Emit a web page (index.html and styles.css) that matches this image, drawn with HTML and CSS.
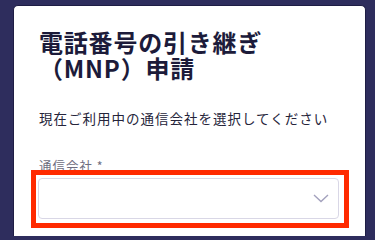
FILE: index.html
```html
<!DOCTYPE html>
<html lang="ja">
<head>
<meta charset="utf-8">
<link rel="stylesheet" href="styles.css">
</head>
<body>
<div class="card">
  <h1 class="title">電話番号の引き継ぎ<br>（MNP）申請</h1>
  <p class="lead">現在ご利用中の通信会社を選択してください</p>
  <div class="field">
    <label class="label">通信会社 *</label>
    <div class="select">
      <svg class="chevron" width="16" height="9" viewBox="0 0 16 9"><path d="M1 1 L8 7.5 L15 1" fill="none" stroke="#a3a1bd" stroke-width="1.4"/></svg>
    </div>
  </div>
</div>
<div class="highlight"></div>
</body>
</html>
```
FILE: styles.css
```css
html, body {
  margin: 0;
  padding: 0;
}
body {
  background: #2e2d5d;
  width: 375px;
  height: 236px;
  overflow: hidden;
  font-family: "Noto Sans CJK JP", "Noto Sans", sans-serif;
}
.card {
  margin: 5px 9px 0 13px;
  background: #ffffff;
  border: 1px solid #1e1d44;
  border-bottom: none;
  border-radius: 5px 5px 0 0;
  padding: 23px 26px 0 24px;
  height: 231px;
  box-sizing: border-box;
}
.title {
  margin: 0;
  font-size: 24px;
  line-height: 26px;
  font-weight: 700;
  color: #1c1b3a;
  letter-spacing: 0.8px;
  padding-left: 1px;
}
.lead {
  margin: 27px 0 0;
  font-size: 13.5px;
  line-height: 20px;
  color: #25243a;
  letter-spacing: 1px;
  padding-left: 1px;
  white-space: nowrap;
}
.field {
  margin-top: 29px;
}
.label {
  display: block;
  font-size: 12.5px;
  line-height: 16px;
  color: #6e6d80;
  letter-spacing: 1px;
  padding-left: 1px;
  padding-top: 1px;
}
.select {
  margin-top: 4px;
  height: 41px;
  border: 1px solid #d9d7e6;
  border-radius: 4px;
  box-sizing: border-box;
  display: flex;
  align-items: center;
  justify-content: flex-end;
  padding-right: 9px;
}
.chevron {
  display: block;
}
.highlight {
  position: absolute;
  left: 31px;
  top: 170px;
  width: 318px;
  height: 58px;
  border: 5px solid #ff2a00;
  box-sizing: border-box;
}
```
